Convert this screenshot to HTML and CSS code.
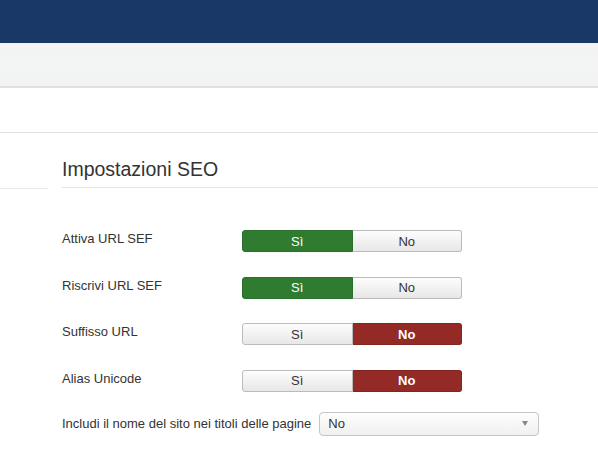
FILE: index.html
```html
<!DOCTYPE html>
<html lang="it">
<head>
<meta charset="utf-8">
<link rel="stylesheet" href="styles.css">
</head>
<body>
<header class="topbar"></header>
<div class="subhead"></div>
<div class="toolbar"></div>
<div class="main">
  <div class="side"></div>
  <div class="content">
    <div class="legend">Impostazioni SEO</div>
    <div class="group">
      <div class="label">Attiva URL SEF</div>
      <div class="yesno">
        <span class="btn on-yes">Sì</span><span class="btn">No</span>
      </div>
    </div>
    <div class="group">
      <div class="label">Riscrivi URL SEF</div>
      <div class="yesno">
        <span class="btn on-yes">Sì</span><span class="btn">No</span>
      </div>
    </div>
    <div class="group">
      <div class="label">Suffisso URL</div>
      <div class="yesno">
        <span class="btn">Sì</span><span class="btn on-no">No</span>
      </div>
    </div>
    <div class="group">
      <div class="label">Alias Unicode</div>
      <div class="yesno">
        <span class="btn">Sì</span><span class="btn on-no">No</span>
      </div>
    </div>
    <div class="inline">
      <span class="ilabel">Includi il nome del sito nei titoli delle pagine</span>
      <div class="select"><span>No</span><span class="caret"></span></div>
    </div>
  </div>
</div>
</body>
</html>
```

FILE: styles.css
```css
html, body {
  margin: 0;
  padding: 0;
  background: #fff;
  font-family: "Liberation Sans", Arial, sans-serif;
  font-size: 13px;
  color: #333;
}
.topbar {
  height: 43px;
  background: #1a3867;
}
.subhead {
  height: 43px;
  background: linear-gradient(#f2f4f3, #f3f3f3);
  border-bottom: 2px solid #e1e1e1;
}
.toolbar {
  height: 44px;
  border-bottom: 1px solid #e0e0e0;
}
.main {
  display: flex;
}
.side {
  width: 48px;
  height: 55px;
  border-bottom: 1px solid #e8e8e8;
  flex: none;
}
.content {
  flex: 1;
  margin-left: 14px;
}
.legend {
  height: 55px;
  box-sizing: border-box;
  padding-top: 24px;
  font-size: 19.5px;
  line-height: 24px;
  color: #333;
  border-bottom: 1px solid #e5e5e5;
  margin-bottom: 42px;
}
.group {
  display: flex;
  height: 22px;
  margin-bottom: 24.5px;
}
.label {
  width: 180px;
  line-height: 17px;
  color: #333;
}
.yesno {
  display: flex;
  width: 220px;
  height: 22px;
}
.btn {
  flex: 1;
  display: flex;
  align-items: center;
  justify-content: center;
  box-sizing: border-box;
  border: 1px solid #bbb;
  background: linear-gradient(#fdfdfd, #e7e7e7);
  color: #333;
  font-size: 13px;
}
.btn:first-child {
  border-radius: 3px 0 0 3px;
}
.btn:last-child {
  border-radius: 0 3px 3px 0;
  border-left: none;
}
.btn.on-yes {
  background: #2f7c31;
  border-color: #2a6f2c;
  color: #fff;
}
.btn.on-no {
  background: #942a25;
  border-color: #822420;
  color: #fff;
  font-weight: bold;
}
.inline {
  display: flex;
  align-items: center;
  margin-top: -4.5px;
}
.ilabel {
  color: #333;
}
.select {
  margin-left: 8px;
  width: 220px;
  height: 24px;
  box-sizing: border-box;
  border: 1px solid #c5c5c5;
  border-radius: 4px;
  background: linear-gradient(#fefefe, #f0f0f0);
  display: flex;
  align-items: center;
  justify-content: space-between;
  padding: 0 10px 0 8px;
  color: #333;
}
.caret {
  width: 0;
  height: 0;
  border-left: 3.5px solid transparent;
  border-right: 3.5px solid transparent;
  border-top: 5px solid #888;
}
```
